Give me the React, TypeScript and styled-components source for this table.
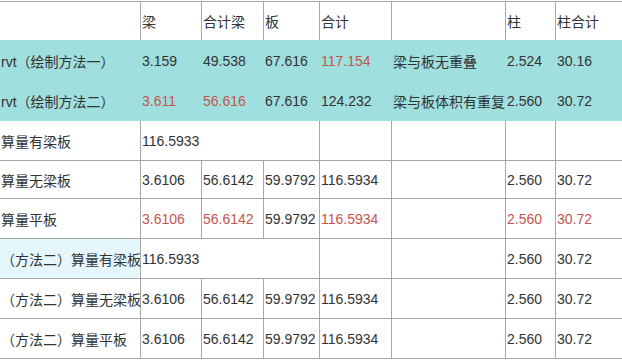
import React, { FC } from "react";
import styled, { createGlobalStyle } from "styled-components";

const GlobalStyle = createGlobalStyle`
    html, body {
        margin: 0;
        padding: 0;
        background: #ffffff;
        overflow: hidden;
    }
`

const Sheet = styled.div`
    display: grid;
    grid-template-columns: 141px 61px 62px 56px 72px 114px 50px 90px;
    grid-template-rows: 40px 40px 40px 40px 38px 40px 40px 40px 40px;
    margin-top: 1px;
    width: 646px;
    font-family: "Liberation Sans", Arial, "Noto Sans CJK SC", sans-serif;
    font-size: 14px;
    color: #333333;
`

type Tone = "plain" | "head" | "teal" | "pale"

const Cell = styled.div<{ $tone?: Tone, $red?: boolean, $span?: number }>`
    box-sizing: border-box;
    display: flex;
    align-items: center;
    padding-left: 1px;
    white-space: nowrap;
    overflow: visible;
    grid-column: span ${p => p.$span || 1};
    background: ${p => p.$tone === "teal" ? "#9fdfdd" : p.$tone === "pale" ? "#e5f6fc" : "#ffffff"};
    border-right: 1px solid ${p => p.$tone === "teal" ? "#9fdfdd" : "#a8a8a8"};
    border-bottom: 1px solid ${p => p.$tone === "teal" || p.$tone === "head" ? "#9fdfdd" : "#a8a8a8"};
    border-top: ${p => p.$tone === "head" ? "1px solid #a8a8a8" : "none"};
    color: ${p => p.$red ? "#c4554f" : "#333333"};
`

type Entry = string | { text: string, red?: boolean, span?: number, tone?: Tone }

interface RowProps {
    tone?: Tone
    cells: Entry[]
}

const Row: FC<RowProps> = ({ tone = "plain", cells }) => (
    <>
        {cells.map((c, i) => {
            const e = typeof c === "string" ? { text: c } : c
            return (
                <Cell key={i} $tone={e.tone || tone} $red={e.red} $span={e.span}>
                    {e.text}
                </Cell>
            )
        })}
    </>
)

const red = (text: string) => ({ text, red: true })

export default function App() {
    return (
        <>
            <GlobalStyle />
            <Sheet>
                <Row tone="head" cells={["", "梁", "合计梁", "板", "合计", "", "柱", "柱合计"]} />
                <Row tone="teal" cells={["rvt（绘制方法一）", "3.159", "49.538", "67.616", red("117.154"), "梁与板无重叠", "2.524", "30.16"]} />
                <Row tone="teal" cells={["rvt（绘制方法二）", red("3.611"), red("56.616"), "67.616", "124.232", "梁与板体积有重复", "2.560", "30.72"]} />
                <Row cells={["算量有梁板", { text: "116.5933", span: 3 }, "", "", "", ""]} />
                <Row cells={["算量无梁板", "3.6106", "56.6142", "59.9792", "116.5934", "", "2.560", "30.72"]} />
                <Row cells={["算量平板", red("3.6106"), red("56.6142"), "59.9792", red("116.5934"), "", red("2.560"), red("30.72")]} />
                <Row cells={[{ text: "（方法二）算量有梁板", tone: "pale" }, { text: "116.5933", span: 3 }, "", "", "2.560", "30.72"]} />
                <Row cells={["（方法二）算量无梁板", "3.6106", "56.6142", "59.9792", "116.5934", "", "2.560", "30.72"]} />
                <Row cells={["（方法二）算量平板", "3.6106", "56.6142", "59.9792", "116.5934", "", "2.560", "30.72"]} />
            </Sheet>
        </>
    )
}
